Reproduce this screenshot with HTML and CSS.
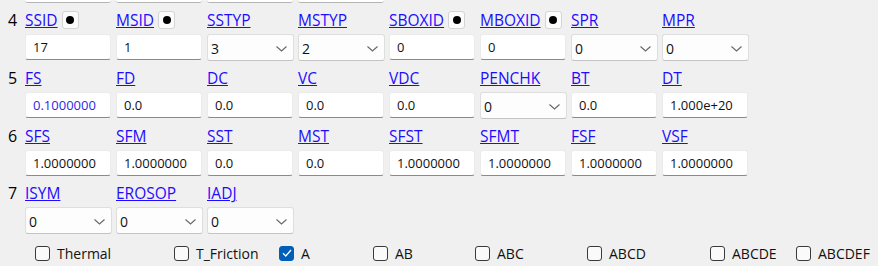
FILE: index.html
```html
<!DOCTYPE html>
<html lang="en">
<head>
  <meta charset="UTF-8">
  <title>Contact card</title>
  <link rel="stylesheet" href="styles.css">
</head>
<body>
  <div class="panel">
    <div class="strip">
      <span></span><span></span><span></span><span></span>
    </div>

    <div class="row">
      <div class="num">4</div>
      <div class="fields">
        <div class="field">
          <div class="label"><a href="#">SSID</a><span class="pin"><i></i></span></div>
          <input class="box" value="17">
        </div>
        <div class="field">
          <div class="label"><a href="#">MSID</a><span class="pin"><i></i></span></div>
          <input class="box" value="1">
        </div>
        <div class="field">
          <div class="label"><a href="#">SSTYP</a></div>
          <div class="select"><span>3</span><svg width="11" height="6" viewBox="0 0 11 6"><path d="M0.5 0.5 L5.5 5 L10.5 0.5" fill="none" stroke="#666" stroke-width="1.1"/></svg></div>
        </div>
        <div class="field">
          <div class="label"><a href="#">MSTYP</a></div>
          <div class="select"><span>2</span><svg width="11" height="6" viewBox="0 0 11 6"><path d="M0.5 0.5 L5.5 5 L10.5 0.5" fill="none" stroke="#666" stroke-width="1.1"/></svg></div>
        </div>
        <div class="field">
          <div class="label"><a href="#">SBOXID</a><span class="pin"><i></i></span></div>
          <input class="box" value="0">
        </div>
        <div class="field">
          <div class="label"><a href="#">MBOXID</a><span class="pin"><i></i></span></div>
          <input class="box" value="0">
        </div>
        <div class="field">
          <div class="label"><a href="#">SPR</a></div>
          <div class="select"><span>0</span><svg width="11" height="6" viewBox="0 0 11 6"><path d="M0.5 0.5 L5.5 5 L10.5 0.5" fill="none" stroke="#666" stroke-width="1.1"/></svg></div>
        </div>
        <div class="field">
          <div class="label"><a href="#">MPR</a></div>
          <div class="select"><span>0</span><svg width="11" height="6" viewBox="0 0 11 6"><path d="M0.5 0.5 L5.5 5 L10.5 0.5" fill="none" stroke="#666" stroke-width="1.1"/></svg></div>
        </div>
      </div>
    </div>

    <div class="row">
      <div class="num">5</div>
      <div class="fields">
        <div class="field">
          <div class="label"><a href="#">FS</a></div>
          <input class="box blue" value="0.1000000">
        </div>
        <div class="field">
          <div class="label"><a href="#">FD</a></div>
          <input class="box" value="0.0">
        </div>
        <div class="field">
          <div class="label"><a href="#">DC</a></div>
          <input class="box" value="0.0">
        </div>
        <div class="field">
          <div class="label"><a href="#">VC</a></div>
          <input class="box" value="0.0">
        </div>
        <div class="field">
          <div class="label"><a href="#">VDC</a></div>
          <input class="box" value="0.0">
        </div>
        <div class="field">
          <div class="label"><a href="#">PENCHK</a></div>
          <div class="select"><span>0</span><svg width="11" height="6" viewBox="0 0 11 6"><path d="M0.5 0.5 L5.5 5 L10.5 0.5" fill="none" stroke="#666" stroke-width="1.1"/></svg></div>
        </div>
        <div class="field">
          <div class="label"><a href="#">BT</a></div>
          <input class="box" value="0.0">
        </div>
        <div class="field">
          <div class="label"><a href="#">DT</a></div>
          <input class="box" value="1.000e+20">
        </div>
      </div>
    </div>

    <div class="row">
      <div class="num">6</div>
      <div class="fields">
        <div class="field">
          <div class="label"><a href="#">SFS</a></div>
          <input class="box" value="1.0000000">
        </div>
        <div class="field">
          <div class="label"><a href="#">SFM</a></div>
          <input class="box" value="1.0000000">
        </div>
        <div class="field">
          <div class="label"><a href="#">SST</a></div>
          <input class="box" value="0.0">
        </div>
        <div class="field">
          <div class="label"><a href="#">MST</a></div>
          <input class="box" value="0.0">
        </div>
        <div class="field">
          <div class="label"><a href="#">SFST</a></div>
          <input class="box" value="1.0000000">
        </div>
        <div class="field">
          <div class="label"><a href="#">SFMT</a></div>
          <input class="box" value="1.0000000">
        </div>
        <div class="field">
          <div class="label"><a href="#">FSF</a></div>
          <input class="box" value="1.0000000">
        </div>
        <div class="field">
          <div class="label"><a href="#">VSF</a></div>
          <input class="box" value="1.0000000">
        </div>
      </div>
    </div>

    <div class="row">
      <div class="num">7</div>
      <div class="fields">
        <div class="field">
          <div class="label"><a href="#">ISYM</a></div>
          <div class="select"><span>0</span><svg width="11" height="6" viewBox="0 0 11 6"><path d="M0.5 0.5 L5.5 5 L10.5 0.5" fill="none" stroke="#666" stroke-width="1.1"/></svg></div>
        </div>
        <div class="field">
          <div class="label"><a href="#">EROSOP</a></div>
          <div class="select"><span>0</span><svg width="11" height="6" viewBox="0 0 11 6"><path d="M0.5 0.5 L5.5 5 L10.5 0.5" fill="none" stroke="#666" stroke-width="1.1"/></svg></div>
        </div>
        <div class="field">
          <div class="label"><a href="#">IADJ</a></div>
          <div class="select"><span>0</span><svg width="11" height="6" viewBox="0 0 11 6"><path d="M0.5 0.5 L5.5 5 L10.5 0.5" fill="none" stroke="#666" stroke-width="1.1"/></svg></div>
        </div>
      </div>
    </div>

    <div class="checks">
      <label class="check"><span class="tick"></span>Thermal</label>
      <label class="check"><span class="tick"></span>T_Friction</label>
      <label class="check"><span class="tick on"><svg width="10" height="8" viewBox="0 0 10 8"><path d="M1 4.2 L3.8 7 L9 1" fill="none" stroke="#fff" stroke-width="1.3"/></svg></span>A</label>
      <label class="check"><span class="tick"></span>AB</label>
      <label class="check"><span class="tick"></span>ABC</label>
      <label class="check"><span class="tick"></span>ABCD</label>
      <label class="check"><span class="tick"></span>ABCDE</label>
      <label class="check"><span class="tick"></span>ABCDEF</label>
    </div>
  </div>
</body>
</html>
```

FILE: styles.css
```css
body {
  margin: 0;
  background-color: #f0f0f0;
  font-family: "Open Sans", "Noto Sans", sans-serif;
  color: #000;
}
.panel {
  padding-left: 8px;
}
.strip {
  display: flex;
  gap: 5px;
  margin-left: 17px;
  height: 3px;
  margin-bottom: 7px;
}
.strip span {
  width: 86px;
  height: 2px;
  background: #fff;
  border-bottom: 1px solid #b4b4b4;
  border-radius: 0 0 3px 3px;
}
.row {
  display: flex;
  margin-bottom: 7px;
}
.num {
  width: 17px;
  font-size: 16px;
  line-height: 20px;
}
.fields {
  display: grid;
  grid-template-columns: repeat(8, 86px);
  column-gap: 5px;
}
.field {
  display: flex;
  flex-direction: column;
}
.label {
  display: flex;
  align-items: center;
  gap: 4px;
  height: 20px;
  margin-bottom: 4px;
  font-size: 15.5px;
}
.label a {
  color: #1d0cff;
  text-decoration: underline;
  line-height: 20px;
}
.pin {
  display: flex;
  align-items: center;
  justify-content: center;
  width: 15px;
  height: 16px;
  background: #fbfbfb;
  border: 1px solid #d4d4d4;
  border-radius: 3px;
}
.pin i {
  width: 8px;
  height: 8px;
  border-radius: 50%;
  background: #000;
}
.box {
  box-sizing: border-box;
  width: 86px;
  height: 26px;
  margin: 0;
  padding: 0 7px;
  border: 1px solid #ebebeb;
  border-bottom: 1px solid #8a8a8a;
  border-radius: 3px;
  background: #fff;
  font-family: "Open Sans", "Noto Sans", sans-serif;
  font-size: 13px;
  color: #111;
  outline: none;
}
.box.blue {
  color: #2a2ae6;
}
.select {
  box-sizing: border-box;
  display: flex;
  align-items: center;
  justify-content: space-between;
  width: 87px;
  height: 27px;
  padding: 2px 6px 0 3px;
  background: #fdfdfd;
  border: 1px solid #dedede;
  border-bottom-color: #c4c4c4;
  border-radius: 3px;
  font-size: 14px;
  color: #111;
}
.checks {
  display: grid;
  grid-template-columns: 139px 105px 94px 102px 112px 123px 86px auto;
  margin-left: 27px;
  padding-top: 4px;
  font-size: 14px;
  color: #111;
}
.check {
  display: flex;
  align-items: center;
  gap: 7px;
  height: 16px;
}
.tick {
  box-sizing: border-box;
  display: flex;
  align-items: center;
  justify-content: center;
  width: 15px;
  height: 15px;
  border: 1px solid #3a3a3a;
  border-radius: 3px;
  background: #fafafa;
}
.tick.on {
  background: #005fb8;
  border-color: #005fb8;
}
```
